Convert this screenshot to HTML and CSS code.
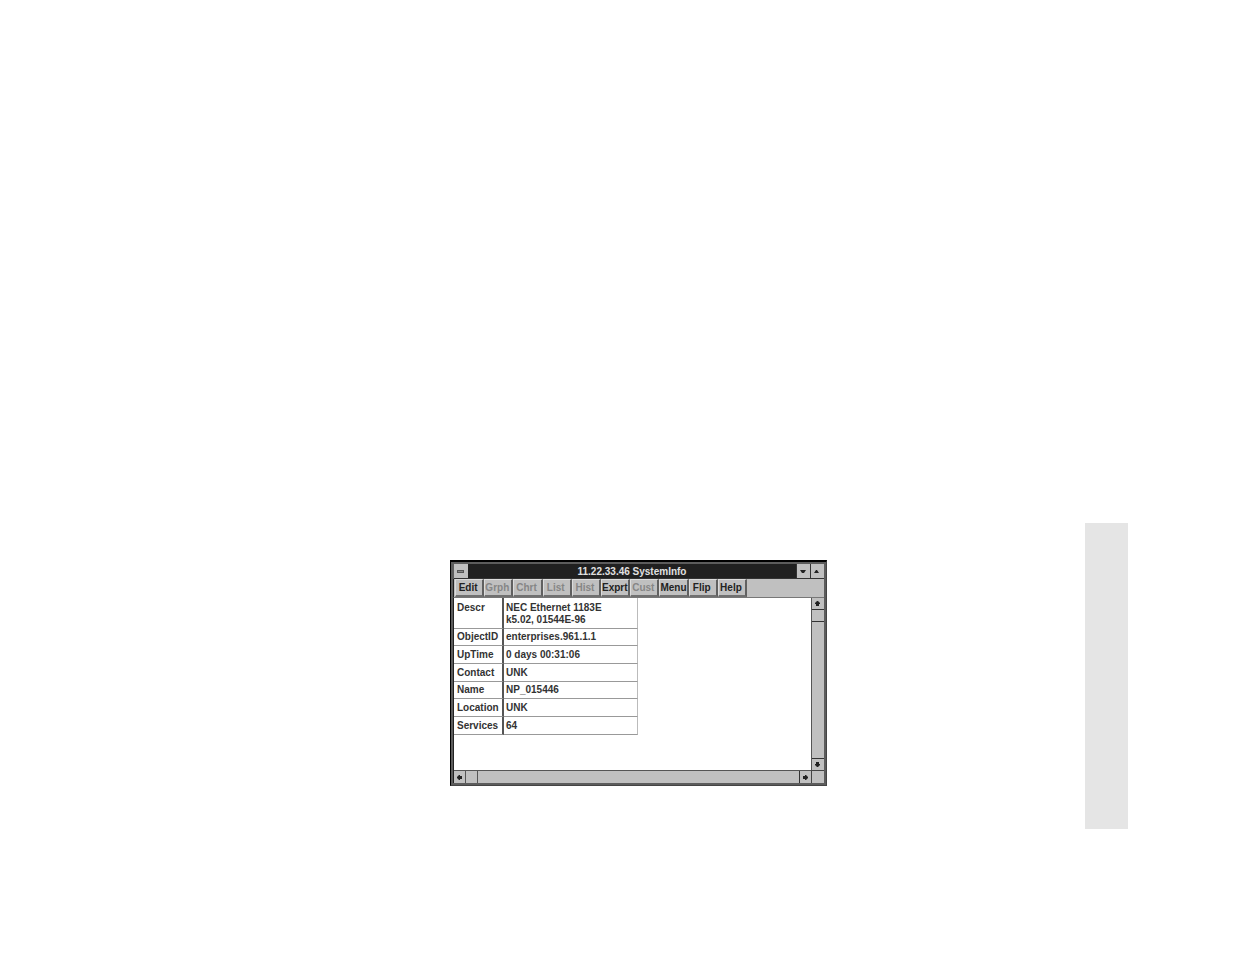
FILE: index.html
```html
<!DOCTYPE html>
<html lang="en">
<head>
  <meta charset="UTF-8">
  <meta name="viewport" content="width=device-width, initial-scale=1.0">
  <title>11.22.33.46 SystemInfo</title>
  <link rel="stylesheet" href="styles.css">
</head>
<body>
  <div class="page">
    <main class="window">
      <header class="titlebar">
        <button class="title-button" type="button" aria-label="Control menu">
          <svg width="13" height="14" viewBox="0 0 13 14"><path d="M3 6h7v3H3z" fill="#555"/><path d="M4 7h5v1H4z" fill="#888"/></svg>
        </button>
        <h1 class="title">11.22.33.46 SystemInfo</h1>
        <button class="title-button" type="button" aria-label="Minimize">
          <svg width="13" height="14" viewBox="0 0 13 14"><path d="M3 6h6L7 9H5z" fill="#222"/></svg>
        </button>
        <button class="title-button" type="button" aria-label="Maximize">
          <svg width="13" height="14" viewBox="0 0 13 14"><path d="M3 9h5L6 6H5z" fill="#222"/></svg>
        </button>
      </header>

      <nav class="toolbar">
        <div class="tools">
          <button type="button">Edit</button>
          <button type="button" disabled>Grph</button>
          <button type="button" disabled>Chrt</button>
          <button type="button" disabled>List</button>
          <button type="button" disabled>Hist</button>
          <button type="button">Exprt</button>
          <button type="button" disabled>Cust</button>
          <button type="button">Menu</button>
          <button type="button">Flip</button>
          <button type="button">Help</button>
        </div>
      </nav>

      <div class="client">
        <div class="content">
          <table class="info">
            <tr class="tall"><th scope="row">Descr</th><td>NEC Ethernet 1183E<br>k5.02, 01544E-96</td></tr>
            <tr class="short"><th scope="row">ObjectID</th><td>enterprises.961.1.1</td></tr>
            <tr><th scope="row">UpTime</th><td>0 days 00:31:06</td></tr>
            <tr><th scope="row">Contact</th><td>UNK</td></tr>
            <tr class="short"><th scope="row">Name</th><td>NP_015446</td></tr>
            <tr><th scope="row">Location</th><td>UNK</td></tr>
            <tr><th scope="row">Services</th><td>64</td></tr>
          </table>
        </div>
        <div class="scrollbar vertical">
          <button type="button" aria-label="Scroll up">
            <svg width="11" height="11" viewBox="0 0 11 11"><path d="M5 3h1l2 2v1H7v2H4V6H3V5z" fill="#222"/></svg>
          </button>
          <div class="thumb"></div>
          <button class="end" type="button" aria-label="Scroll down">
            <svg width="11" height="11" viewBox="0 0 11 11"><path d="M5 8h1l2-2V5H7V3H4v2H3v1z" fill="#222"/></svg>
          </button>
        </div>
        <div class="scrollbar horizontal">
          <button type="button" aria-label="Scroll left">
            <svg width="11" height="11" viewBox="0 0 11 11"><path d="M3 5v1l2 2h1V7h2V4H6V3H5z" fill="#222"/></svg>
          </button>
          <div class="thumb"></div>
          <button class="end" type="button" aria-label="Scroll right">
            <svg width="11" height="11" viewBox="0 0 11 11"><path d="M8 5v1L6 8H5V7H3V4h2V3h1z" fill="#222"/></svg>
          </button>
        </div>
        <div class="corner"></div>
      </div>
    </main>
    <aside class="page-tab"></aside>
  </div>
</body>
</html>
```

FILE: styles.css
```css
* {
  box-sizing: border-box;
}

body {
  margin: 0;
  background: #fff;
  color: #333;
  font-family: "Liberation Sans", Arial, sans-serif;
  font-size: 10px;
  font-weight: bold;
  line-height: 12px;
}

button {
  margin: 0;
  padding: 0;
  border: 0;
  background: #c0c0c0;
  color: #222;
  font: inherit;
}

svg {
  display: block;
}

/* The window sits in the text column, the grey tab near the right edge */
.page {
  display: grid;
  grid-template-columns: 450fr 377fr 258fr 43fr 107fr;
  padding: 523px 0 125px;
}

.window {
  grid-column: 2;
  margin: 37px 0 43px;
  padding: 2px;
  border: 1px solid #000;
  border-top-width: 2px;
  border-right-color: #444;
  border-bottom-color: #444;
  background: #5c5c5c;
}

.page-tab {
  grid-column: 4;
  background: #e5e5e5;
}

/* Title bar */
.titlebar {
  display: flex;
  height: 15px;
  margin-left: 1px;
  background: #202020;
  border-bottom: 1px solid #333;
}

.title {
  flex: 1;
  margin: 0;
  color: #e0e0e0;
  font-size: 10px;
  line-height: 15px;
  text-align: center;
}

.title-button {
  width: 14px;
  border-left: 1px solid #333;
}

.title-button:first-child {
  border-left: 0;
}

/* Toolbar */
.toolbar {
  padding-left: 1px;
  background: #c0c0c0;
  border-left: 1px solid #222;
  border-bottom: 1px solid #777;
}

.tools {
  display: flex;
  width: 292px;
}

.tools button {
  flex: 1 1 0;
  min-width: 0;
  height: 18px;
  padding-right: 2px;
  border: 1px solid #dcdcdc;
  border-right: 2px solid #606060;
  border-bottom: 2px solid #707070;
  white-space: nowrap;
}

.tools button:disabled {
  color: #868686;
}

/* Client area with its scroll bars */
.client {
  display: grid;
  grid-template-columns: 1fr 13px;
  grid-template-rows: auto 13px;
  border-left: 1px solid #222;
}

.content {
  min-height: 172px;
  background: #fff;
}

.info {
  border-collapse: separate;
  border-spacing: 0;
}

.info tr {
  height: 18px;
}

.info .short {
  height: 17px;
}

.info .tall {
  height: 31px;
}

.info th,
.info td {
  padding: 0 2px;
  border-bottom: 1px solid #999;
  text-align: left;
  vertical-align: middle;
  white-space: nowrap;
}

.info th {
  width: 50px;
  padding-left: 3px;
  border-right: 2px solid #555;
}

.info td {
  width: 134px;
  border-right: 1px solid #bbb;
}

.info .tall th,
.info .tall td {
  padding-top: 4px;
  vertical-align: top;
}

.scrollbar {
  display: flex;
  background: #c0c0c0;
}

.scrollbar button,
.thumb {
  flex: none;
  width: 12px;
  height: 12px;
}

.scrollbar .end {
  margin-left: auto;
}

.vertical {
  flex-direction: column;
  border-left: 1px solid #555;
}

.vertical button,
.vertical .thumb {
  border-bottom: 1px solid #333;
}

.vertical .end {
  margin: auto 0 0;
  border-top: 1px solid #333;
  border-bottom: 0;
}

.horizontal {
  border-top: 1px solid #555;
}

.horizontal button,
.horizontal .thumb {
  border-right: 1px solid #555;
}

.horizontal .end {
  border-left: 1px solid #333;
  border-right: 0;
}

.corner {
  border: 1px solid #444;
  border-right: 0;
  border-bottom: 0;
  background: #c0c0c0;
}
```
